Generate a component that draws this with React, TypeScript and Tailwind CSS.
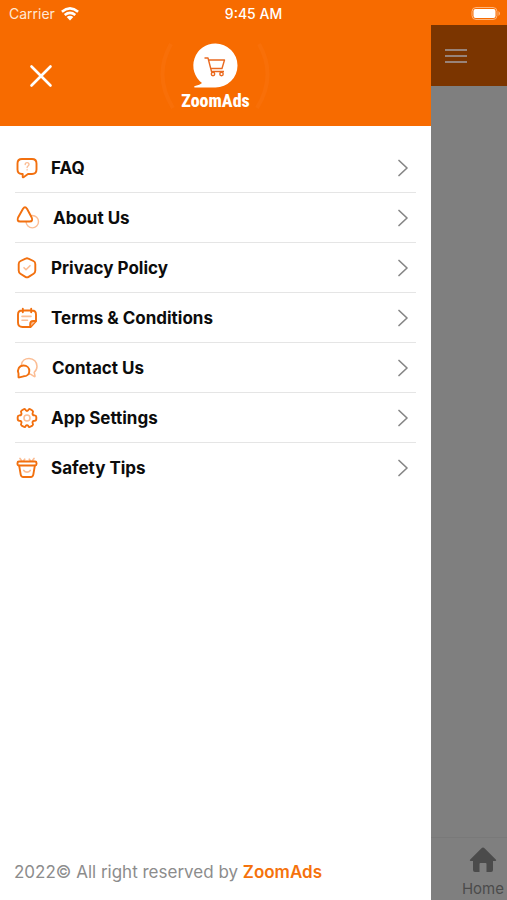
import type { ReactNode } from "react";

const ORANGE = "#f2700f";
const PALE = "#fbbd94";

function Icon({ wide = false, children }: { wide?: boolean; children: ReactNode }) {
  return (
    <svg
      aria-hidden="true"
      viewBox={wide ? "0 0 24 24" : "0 0 22 24"}
      className={wide ? "h-6 w-6 shrink-0" : "h-6 w-[22px] shrink-0"}
      fill="none"
      stroke={ORANGE}
      strokeWidth="1.9"
      strokeLinecap="round"
      strokeLinejoin="round"
    >
      {children}
    </svg>
  );
}

const items: { label: string; gap: string; icon: ReactNode }[] = [
  {
    label: "FAQ",
    gap: "gap-[13px]",
    icon: (
      <Icon>
        <path d="M6 3h10q4.500 0 4.500 4.500v6q0 4.500-4.500 4.500h-4L7.500 21.200Q6.700 21.700 6.700 20.500V18H6q-4.500 0-4.500-4.500v-6Q1.500 3 6 3z" />
        <path stroke={PALE} strokeWidth="1.400" d="M9.200 8.500c0-2.500 3.800-2.500 3.800 0 0 1.500-1.900 1.500-1.900 3M11.100 13.800v.1" />
      </Icon>
    ),
  },
  {
    label: "About Us",
    gap: "gap-[13px]",
    icon: (
      <Icon wide>
        <circle cx="16.300" cy="15.700" r="6.200" stroke={PALE} strokeWidth="1.400" />
        <path fill="white" d="M7 2.700Q9-.2 11 2.700l4.700 8.800q1.600 4-2 4H4.100q-3.600 0-2-4z" />
      </Icon>
    ),
  },
  {
    label: "Privacy Policy",
    gap: "gap-[13px]",
    icon: (
      <Icon>
        <path d="M9.600 2.700q1.400-.8 2.800 0l5 2.300Q19.300 5.900 19.300 8v6.500q0 2.100-1.700 3.200l-5 3.200q-1.600 1-3.200 0l-5-3.200q-1.700-1.100-1.700-3.200V8q0-2.100 1.900-3z" />
        <path stroke={PALE} strokeWidth="1.600" d="m8 11.700 2 2 4-4" />
      </Icon>
    ),
  },
  {
    label: "Terms & Conditions",
    gap: "gap-[13px]",
    icon: (
      <Icon>
        <path d="M6 4.500h10q4 0 4 4V15l-5.500 6H6.500Q2 21 2 16.500v-8q0-4 4-4zM6.800 2.800v3.400M15.200 2.800v3.400" />
        <path fill={PALE} d="M14.200 20.700v-2.700q0-3 3-3h2.600" />
        <path stroke={PALE} strokeWidth="1.600" d="M6 10.400h9M6 14.200h5.500" />
      </Icon>
    ),
  },
  {
    label: "Contact Us",
    gap: "gap-[14px]",
    icon: (
      <Icon>
        <path stroke={PALE} strokeWidth="1.500" d="M5.500 8.500C6 5 9 2.500 13 2.500c4.800 0 8 3.500 8 7.800 0 2.600-1.100 4.700-2.800 6l.8 3.500q.2 1.300-1 .6l-3.500-2.200-1.500.1" />
        <path d="M2.500 17.500C1 13.700 3.100 9.500 7.600 9.500c3.500 0 5.700 2.500 5.700 5.400 0 3.300-2.500 5.400-5.700 5.400L3.300 21.400q-1 .2-.8-.8z" />
      </Icon>
    ),
  },
  {
    label: "App Settings",
    gap: "gap-[13px]",
    icon: (
      <Icon>
        <path d="M7.700 3.300Q9 2.500 9.600 4q1.400 2 2.800 0 .6-1.500 1.900-.7l2 1.200q1.200.8.500 2.100c-.8 1.700 0 2.800 1.800 2.800q1.700.1 1.700 1.600v2q0 1.600-1.700 1.700c-1.800 0-2.600 1.100-1.800 2.800q.7 1.300-.5 2.100l-2 1.200q-1.300.8-1.900-.7-1.400-2-2.800 0-.6 1.500-1.900.7l-2-1.200q-1.200-.8-.5-2.100c.8-1.700 0-2.800-1.800-2.800Q1.700 14.600 1.700 13v-2q0-1.500 1.700-1.600c1.800 0 2.600-1.100 1.800-2.800q-.7-1.300.5-2.100z" />
        <circle cx="11" cy="12" r="3" stroke={PALE} strokeWidth="1.600" />
      </Icon>
    ),
  },
  {
    label: "Safety Tips",
    gap: "gap-[13px]",
    icon: (
      <Icon>
        <path stroke={PALE} strokeWidth="1.700" d="M5.800 5 4 2.500M16.200 5 18 2.500M7.500 5l1.200-1.800M14.500 5l-1.200-1.800M7.800 14.500c1.600 2.200 4.800 2.200 6.400 0" />
        <rect x="1.500" y="5.500" width="19" height="4" rx="1.500" />
        <path d="m3.200 9.800 1.500 8.900q.4 2.300 2.600 2.300h7.400q2.200 0 2.600-2.300l1.500-8.900" />
      </Icon>
    ),
  },
];

function StatusBar() {
  return (
    <div className="grid h-[25px] shrink-0 grid-cols-3 items-center bg-[#f76b00] pt-[3px] text-sm text-white">
      <div className="flex items-center gap-[6px] pl-[9px] text-[#ffe8d4]">
        <span>Carrier</span>
        <svg aria-hidden="true" viewBox="0 0 18 14" className="h-[14px] w-[18px]" fill="none" stroke="white" strokeWidth="2.600">
          <path d="M.9 4.700Q9-2 17.100 4.700M3.700 8Q9 3.700 14.300 8" />
          <path d="M9 13.500 5.700 10q3.300-2.500 6.600 0z" fill="white" stroke="none" />
        </svg>
      </div>
      <span className="text-center font-medium">9:45 AM</span>
      <svg aria-label="Battery full" role="img" viewBox="0 0 31 14" className="mr-[5px] h-[14px] w-[31px] justify-self-end">
        <rect x="1" y=".5" width="25" height="12" rx="4" fill="none" stroke="#ffb57b" />
        <rect x="2.500" y="2" width="22" height="9" rx="2" fill="white" />
        <path d="M27.500 4q3 2.500 0 5z" fill="#ffb57b" />
      </svg>
    </div>
  );
}

function Logo() {
  return (
    <svg role="img" aria-label="ZoomAds" viewBox="0 0 120 84" className="h-[84px] w-[120px]">
      <path fill="none" stroke="#f86f08" strokeWidth="4" d="M16 10Q-2 42 18 74M104 10Q122 42 102 74" />
      <path fill="white" d="M60.500 9.500a22 22 0 0 1 0 44H40q-2-.5 0-1.500 5-1 7-3A22 22 0 0 1 60.500 9.500z" />
      <g fill="none" stroke="#e96a20" strokeWidth="1.400" strokeLinejoin="round">
        <path d="M49.500 24h3.500L56.500 37.500H69M54 26H69.500L67 34.500H56" />
        <circle cx="58" cy="40" r="1.700" />
        <circle cx="66.500" cy="40" r="1.700" />
      </g>
      <text x="60.500" y="73" textAnchor="middle" fill="white" className="font-['Roboto_Condensed','Roboto',sans-serif] text-[18px] font-extrabold">
        ZoomAds
      </text>
    </svg>
  );
}

function Drawer() {
  return (
    <aside className="flex w-[85%] shrink-0 flex-col bg-white">
      <header className="grid h-[101px] grid-cols-[1fr_auto_1fr] items-center bg-[#f76b00]">
        <button aria-label="Close menu" className="ml-[29px] h-6 w-6">
          <svg aria-hidden="true" viewBox="0 0 24 24" className="h-6 w-6" stroke="white" strokeWidth="2.600" strokeLinecap="round">
            <path d="m2.500 2.500 19 19M21.500 2.500l-19 19" />
          </svg>
        </button>
        <Logo />
      </header>
      <nav className="px-[15px] pt-[17px]">
        <ul>
          {items.map(({ label, gap, icon }) => (
            <li key={label} className="border-b border-[#e5e5e5] last:border-b-0">
              <a href="#" className={`flex h-[49px] items-center pl-[1px] text-[17px] font-bold text-[#0c0c0c] ${gap}`}>
                {icon}
                <span className="pt-[2px]">{label}</span>
                <svg aria-hidden="true" viewBox="0 0 12 18" className="mr-[7px] ml-auto h-[18px] w-3" fill="none" stroke="#868686" strokeWidth="1.700" strokeLinecap="round" strokeLinejoin="round">
                  <path d="m2 1.500 8 7.500-8 7.500" />
                </svg>
              </a>
            </li>
          ))}
        </ul>
      </nav>
      <footer className="mt-auto px-[14px] pb-4 text-[17px] leading-6 text-[#8c8c8c]">
        2022© All right reserved by <strong className="font-semibold text-[#f5720c]">ZoomAds</strong>
      </footer>
    </aside>
  );
}

function DimmedPage() {
  return (
    <main className="flex min-w-0 flex-1 flex-col bg-[#7f7f7f]">
      <header className="flex h-[61px] items-center bg-[#7b3500] pl-[14px]">
        <button aria-label="Open menu" className="flex h-6 w-[22px] flex-col justify-center gap-1">
          <span className="h-[2px] w-full bg-[#988379]" />
          <span className="h-[2px] w-full bg-[#988379]" />
          <span className="h-[2px] w-full bg-[#988379]" />
        </button>
      </header>
      <nav className="mt-auto flex h-[63px] justify-end border-t border-[#797979] pr-[3px]">
        <a href="#" className="flex flex-col items-center pt-[9px] text-[15px] leading-5 text-[#4b4b4b]">
          <svg aria-hidden="true" viewBox="0 0 28 26" className="mb-[6px] h-[26px] w-7 shrink-0" fill="currentColor">
            <path d="M12.500 1.200q1.500-1.200 3 0L27 12.800q.8 1.200-.8 1.200H24v9q0 2-2 2h-4.500v-8q0-1-1-1h-5q-1 0-1 1v8H6q-2 0-2-2v-9H1.800Q.2 14 1 12.800z" />
          </svg>
          <span>Home</span>
        </a>
      </nav>
    </main>
  );
}

export default function App() {
  return (
    <div className="flex h-screen flex-col overflow-hidden font-['Inter','Liberation_Sans',sans-serif]">
      <StatusBar />
      <div className="flex min-h-0 flex-1">
        <Drawer />
        <DimmedPage />
      </div>
    </div>
  );
}
